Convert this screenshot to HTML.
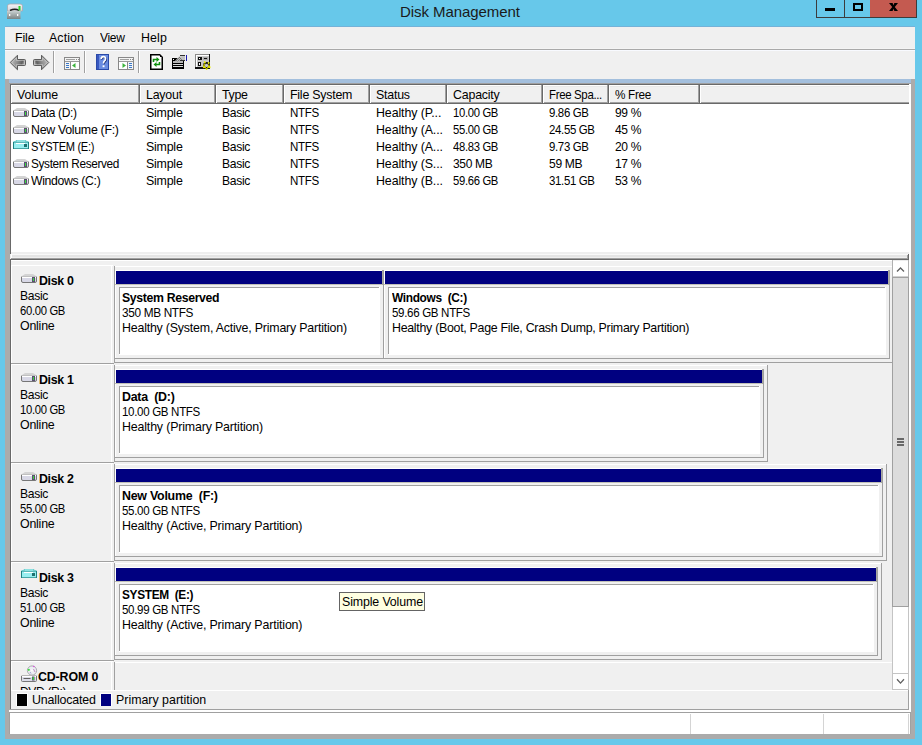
<!DOCTYPE html>
<html><head><meta charset="utf-8"><style>
html,body{margin:0;padding:0}
body{width:922px;height:745px;background:#67c8ea;position:relative;overflow:hidden;font-family:"Liberation Sans",sans-serif}
.r{position:absolute}
.t{position:absolute;white-space:pre}
</style></head><body>
<div class="r" style="left:5px;top:26px;width:910px;height:1px;background:#74b2d8;"></div>
<div class="r" style="left:5px;top:27px;width:910px;height:712px;background:#f0f0f0;"></div>
<svg class="r" style="left:4px;top:0px" width="22" height="22" viewBox="0 0 22 22">
<defs><linearGradient id="tib" x1="0" y1="0" x2="0" y2="1"><stop offset="0" stop-color="#c8d0d0"/><stop offset="1" stop-color="#7c8484"/></linearGradient>
<linearGradient id="tit" x1="0" y1="0" x2="0" y2="1"><stop offset="0" stop-color="#f4f4f4"/><stop offset="1" stop-color="#d8d4dc"/></linearGradient></defs>
<path d="M3.5 6 Q3.5 4 6 4 L16 4 Q18.5 4 18.5 6 L18.5 11 L3.5 11 Z" fill="url(#tit)" stroke="#a8a8b0" stroke-width="0.8"/>
<path d="M6 10.5 Q11 8 15 10.5" fill="none" stroke="#202020" stroke-width="1.4"/>
<rect x="14.5" y="6" width="2" height="4.5" fill="#30d030"/>
<rect x="3" y="11" width="13.5" height="8" fill="url(#tib)"/>
<rect x="5" y="14" width="1.3" height="2" fill="#ffffff"/>
<rect x="13" y="14" width="1.3" height="2" fill="#ffffff"/>
</svg>
<div class="t" style="left:400px;top:4.20px;font-size:15px;line-height:15px;color:#1a1a1a;letter-spacing:-0.07px;">Disk Management</div>
<div class="r" style="left:816px;top:0px;width:101px;height:18px;background:#3c3c3c;"></div>
<div class="r" style="left:817px;top:0px;width:27px;height:17px;background:#67c8ea;"></div>
<div class="r" style="left:845px;top:0px;width:25px;height:17px;background:#67c8ea;"></div>
<div class="r" style="left:870px;top:0px;width:46px;height:17px;background:#c45a50;"></div>
<div class="r" style="left:825px;top:8px;width:10px;height:3px;background:#000;"></div>
<div class="r" style="left:853px;top:3px;width:6px;height:4px;border:2px solid #000"></div>
<svg class="r" style="left:889px;top:3px" width="10" height="8" viewBox="0 0 10 8">
<path d="M0 0 L3.6 0 L4.5 2.2 L5.4 0 L9 0 L5.8 4 L9 8 L5.4 8 L4.5 5.8 L3.6 8 L0 8 L3.2 4 Z" fill="#000"/></svg>
<div class="t" style="left:15px;top:31.65px;font-size:12.4px;line-height:12.4px;color:#000;letter-spacing:-0.10px;">File</div>
<div class="t" style="left:49px;top:31.65px;font-size:12.4px;line-height:12.4px;color:#000;letter-spacing:0.10px;">Action</div>
<div class="t" style="left:100px;top:31.65px;font-size:12.4px;line-height:12.4px;color:#000;letter-spacing:-0.35px;transform:scaleX(0.9708);transform-origin:0 0;">View</div>
<div class="t" style="left:141px;top:31.65px;font-size:12.4px;line-height:12.4px;color:#000;letter-spacing:0.10px;">Help</div>
<div class="r" style="left:5px;top:48px;width:910px;height:1px;background:#f4f4f4;"></div>
<div class="r" style="left:5px;top:49px;width:910px;height:1px;background:#a9a9a9;"></div>
<div class="r" style="left:5px;top:50px;width:910px;height:1px;background:#f8faff;"></div>
<div class="r" style="left:53px;top:51px;width:1px;height:22px;background:#a0a0a0;"></div>
<div class="r" style="left:54px;top:51px;width:1px;height:22px;background:#ffffff;"></div>
<div class="r" style="left:84px;top:51px;width:1px;height:22px;background:#a0a0a0;"></div>
<div class="r" style="left:85px;top:51px;width:1px;height:22px;background:#ffffff;"></div>
<div class="r" style="left:138px;top:51px;width:1px;height:22px;background:#a0a0a0;"></div>
<div class="r" style="left:139px;top:51px;width:1px;height:22px;background:#ffffff;"></div>
<svg class="r" style="left:9px;top:54px" width="18" height="17" viewBox="0 0 18 17">
<defs><linearGradient id="ag" x1="0" y1="0" x2="1" y2="0.3"><stop offset="0" stop-color="#c8c8c8"/><stop offset="0.55" stop-color="#909090"/><stop offset="0.85" stop-color="#606060"/><stop offset="1" stop-color="#a0a0a0"/></linearGradient>
<linearGradient id="ag2" x1="1" y1="0" x2="0" y2="0.3"><stop offset="0" stop-color="#c8c8c8"/><stop offset="0.55" stop-color="#909090"/><stop offset="0.85" stop-color="#606060"/><stop offset="1" stop-color="#a0a0a0"/></linearGradient></defs>
<path d="M1.2 8.5 L8.5 1.2 L8.5 5.5 L15.5 5.5 Q16.5 5.5 16.5 6.5 L16.5 10.5 Q16.5 11.5 15.5 11.5 L8.5 11.5 L8.5 15.8 Z" fill="url(#ag)" stroke="#5c5c5c" stroke-width="1"/>
<path d="M2.8 8.5 L7.5 3.8 L7.5 6.5 L15.5 6.5 L15.5 10.5 L7.5 10.5 L7.5 13.2 Z" fill="none" stroke="#e0e0e0" stroke-width="0.6" opacity="0.8"/>
</svg>
<svg class="r" style="left:32px;top:54px" width="18" height="17" viewBox="0 0 18 17">
<path d="M16.8 8.5 L9.5 1.2 L9.5 5.5 L2.5 5.5 Q1.5 5.5 1.5 6.5 L1.5 10.5 Q1.5 11.5 2.5 11.5 L9.5 11.5 L9.5 15.8 Z" fill="url(#ag2)" stroke="#5c5c5c" stroke-width="1"/>
<path d="M15.2 8.5 L10.5 3.8 L10.5 6.5 L2.5 6.5 L2.5 10.5 L10.5 10.5 L10.5 13.2 Z" fill="none" stroke="#e0e0e0" stroke-width="0.6" opacity="0.8"/>
</svg>
<svg class="r" style="left:64px;top:57px" width="16" height="13" viewBox="0 0 16 13">
<rect x="0.5" y="0.5" width="15" height="12" fill="#f4f4f4" stroke="#888"/>
<rect x="2" y="2" width="9" height="1" fill="#a0a0a0"/>
<rect x="12" y="2" width="1" height="1" fill="#888"/>
<rect x="14" y="2" width="1" height="1" fill="#888"/>
<rect x="1" y="4" width="14" height="1" fill="#9a9a9a"/>
<rect x="6" y="5" width="1" height="7" fill="#888"/>
<rect x="7" y="5" width="8" height="7" fill="#ffffff"/>
<rect x="2" y="6" width="3" height="1" fill="#3a78c8"/>
<rect x="2" y="8" width="3" height="1" fill="#3a78c8"/>
<rect x="2" y="10" width="3" height="1" fill="#3a78c8"/>
<path d="M8 8.5 L11.5 6 L11.5 11 Z" fill="#3cb43c"/></svg>
<svg class="r" style="left:118px;top:57px" width="16" height="13" viewBox="0 0 16 13">
<rect x="0.5" y="0.5" width="15" height="12" fill="#f4f4f4" stroke="#888"/>
<rect x="2" y="2" width="9" height="1" fill="#a0a0a0"/>
<rect x="12" y="2" width="1" height="1" fill="#888"/>
<rect x="14" y="2" width="1" height="1" fill="#888"/>
<rect x="1" y="4" width="14" height="1" fill="#9a9a9a"/>
<rect x="9" y="5" width="1" height="7" fill="#888"/>
<rect x="1" y="5" width="8" height="7" fill="#ffffff"/>
<rect x="11" y="6" width="3" height="1" fill="#3a78c8"/>
<rect x="11" y="8" width="3" height="1" fill="#3a78c8"/>
<rect x="11" y="10" width="3" height="1" fill="#3a78c8"/>
<path d="M8 8.5 L4.5 6 L4.5 11 Z" fill="#3cb43c"/></svg>
<svg class="r" style="left:96px;top:54px" width="13" height="16" viewBox="0 0 13 16">
<rect x="0" y="0" width="13" height="16" fill="#2a4aa8"/>
<rect x="3" y="1" width="9" height="14" fill="#6a8ce0"/>
<rect x="1" y="1" width="2" height="14" fill="#3858c0"/>
<path d="M5.2 5 Q5.2 2.6 7.4 2.6 Q9.6 2.6 9.6 4.8 Q9.6 6.2 8.3 7.2 Q7.5 7.9 7.5 9.6" fill="none" stroke="#1a2a70" stroke-width="1.6" transform="translate(0.6,0.6)"/>
<path d="M5.2 5 Q5.2 2.6 7.4 2.6 Q9.6 2.6 9.6 4.8 Q9.6 6.2 8.3 7.2 Q7.5 7.9 7.5 9.6" fill="none" stroke="#ffffff" stroke-width="1.6"/>
<rect x="6.6" y="11.3" width="1.9" height="1.9" fill="#ffffff"/>
</svg>
<svg class="r" style="left:150px;top:54px" width="14" height="16" viewBox="0 0 14 16">
<path d="M0 0 L10 0 L13 3 L13 16 L0 16 Z" fill="#000"/>
<path d="M1.5 1.5 L9.5 1.5 L11.5 3.5 L11.5 14.5 L1.5 14.5 Z" fill="#fff"/>
<rect x="10" y="1" width="1" height="2" fill="#000"/>
<path d="M3.5 8 L3.5 5.5 L7 5.5" fill="none" stroke="#109010" stroke-width="1.6"/>
<path d="M6.5 3 L9.5 5.5 L6.5 8 Z" fill="#109010"/>
<path d="M9.5 8 L9.5 10.5 L6 10.5" fill="none" stroke="#109010" stroke-width="1.6"/>
<path d="M6.5 8 L3.5 10.5 L6.5 13 Z" fill="#109010"/>
</svg>
<svg class="r" style="left:172px;top:55px" width="15" height="14" viewBox="0 0 15 14">
<rect x="0" y="3" width="12" height="11" fill="#000"/>
<rect x="1" y="6" width="10" height="2" fill="#b8b8b8"/>
<rect x="1" y="9" width="10" height="1" fill="#d8d8d8"/>
<rect x="1" y="11" width="10" height="1" fill="#d8d8d8"/>
<rect x="1" y="4" width="1" height="1" fill="#fff"/>
<path d="M3 6 L7 1.5 L13 1 L13 5 L9 5 L6 7 Z" fill="#c0c0c0"/>
<path d="M4 6 L7.5 2.5 M5.5 6.5 L8.5 3.5 M7 2 L10 5" stroke="#606060" stroke-width="0.7"/>
<rect x="8" y="0" width="5" height="1" fill="#303030"/>
<rect x="8" y="5" width="5" height="1" fill="#303030"/>
<rect x="14" y="0" width="1" height="6" fill="#1a1ab0"/>
</svg>
<svg class="r" style="left:195px;top:54px" width="17" height="17" viewBox="0 0 17 17">
<rect x="0" y="0" width="15" height="15" fill="#101010"/>
<rect x="0" y="0" width="14" height="1" fill="#8a8a8a"/>
<rect x="0" y="0" width="1" height="14" fill="#8a8a8a"/>
<rect x="1" y="1" width="13" height="12" fill="#c8c8c8"/>
<rect x="1" y="1" width="13" height="1" fill="#ffffff"/>
<rect x="1" y="1" width="1" height="12" fill="#ffffff"/>
<rect x="3" y="3" width="4" height="3" fill="#101010"/>
<rect x="4" y="4" width="1" height="1" fill="#ffffff"/>
<rect x="8" y="3" width="5" height="3" fill="#a8a8a8"/>
<rect x="9" y="4" width="3" height="1" fill="#101010"/>
<rect x="3" y="8" width="3" height="4" fill="#101010"/>
<rect x="4" y="9" width="1" height="2" fill="#ffffff"/>
<rect x="0" y="13" width="9" height="2" fill="#101010"/>
<circle cx="11.5" cy="11.5" r="2.6" fill="none" stroke="#101010" stroke-width="1.8"/>
<path d="M9.3 7.3 L10.3 9.3 M14.3 8.3 L13.2 9.8 M8 13.5 L9.5 12.8 M15.5 13.5 L13.8 12.8 M11.6 16 L11.6 14.3" stroke="#f0f000" stroke-width="1.5"/>
<path d="M9.4 10 A2.6 2.6 0 0 0 11 14 M12 14 A2.6 2.6 0 0 0 13.8 10.6" fill="none" stroke="#f0f000" stroke-width="1.2"/>
</svg>
<div class="r" style="left:5px;top:79px;width:5px;height:660px;background:#ababab;"></div>
<div class="r" style="left:911px;top:79px;width:4px;height:660px;background:#ababab;"></div>
<div class="r" style="left:5px;top:734px;width:910px;height:5px;background:#ababab;"></div>
<div class="r" style="left:9px;top:79px;width:902px;height:4px;background:#a3bfdd;"></div>
<div class="r" style="left:9px;top:83px;width:902px;height:1px;background:#a0a0a0;"></div>
<div class="r" style="left:10px;top:84px;width:899px;height:170px;background:#ffffff;"></div>
<div class="r" style="left:10px;top:84px;width:899px;height:1px;background:#696969;"></div>
<div class="r" style="left:10px;top:84px;width:1px;height:170px;background:#696969;"></div>
<div class="r" style="left:909px;top:84px;width:2px;height:629px;background:#ffffff;"></div>
<div class="r" style="left:11px;top:85px;width:898px;height:18px;background:#f0f0f0;"></div>
<div class="r" style="left:11px;top:85px;width:898px;height:1px;background:#ffffff;"></div>
<div class="r" style="left:11px;top:86px;width:898px;height:1px;background:#e8e8e8;"></div>
<div class="r" style="left:11px;top:102px;width:898px;height:1px;background:#a0a0a0;"></div>
<div class="r" style="left:11px;top:103px;width:898px;height:1px;background:#696969;"></div>
<div class="r" style="left:11px;top:85px;width:1px;height:18px;background:#ffffff;"></div>
<div class="r" style="left:140px;top:85px;width:1px;height:18px;background:#ffffff;"></div>
<div class="r" style="left:138px;top:85px;width:1px;height:18px;background:#a0a0a0;"></div>
<div class="r" style="left:139px;top:85px;width:1px;height:19px;background:#696969;"></div>
<div class="r" style="left:216px;top:85px;width:1px;height:18px;background:#ffffff;"></div>
<div class="r" style="left:214px;top:85px;width:1px;height:18px;background:#a0a0a0;"></div>
<div class="r" style="left:215px;top:85px;width:1px;height:19px;background:#696969;"></div>
<div class="r" style="left:284px;top:85px;width:1px;height:18px;background:#ffffff;"></div>
<div class="r" style="left:282px;top:85px;width:1px;height:18px;background:#a0a0a0;"></div>
<div class="r" style="left:283px;top:85px;width:1px;height:19px;background:#696969;"></div>
<div class="r" style="left:370px;top:85px;width:1px;height:18px;background:#ffffff;"></div>
<div class="r" style="left:368px;top:85px;width:1px;height:18px;background:#a0a0a0;"></div>
<div class="r" style="left:369px;top:85px;width:1px;height:19px;background:#696969;"></div>
<div class="r" style="left:447px;top:85px;width:1px;height:18px;background:#ffffff;"></div>
<div class="r" style="left:445px;top:85px;width:1px;height:18px;background:#a0a0a0;"></div>
<div class="r" style="left:446px;top:85px;width:1px;height:19px;background:#696969;"></div>
<div class="r" style="left:543px;top:85px;width:1px;height:18px;background:#ffffff;"></div>
<div class="r" style="left:541px;top:85px;width:1px;height:18px;background:#a0a0a0;"></div>
<div class="r" style="left:542px;top:85px;width:1px;height:19px;background:#696969;"></div>
<div class="r" style="left:609px;top:85px;width:1px;height:18px;background:#ffffff;"></div>
<div class="r" style="left:607px;top:85px;width:1px;height:18px;background:#a0a0a0;"></div>
<div class="r" style="left:608px;top:85px;width:1px;height:19px;background:#696969;"></div>
<div class="r" style="left:700px;top:85px;width:1px;height:18px;background:#ffffff;"></div>
<div class="r" style="left:698px;top:85px;width:1px;height:18px;background:#a0a0a0;"></div>
<div class="r" style="left:699px;top:85px;width:1px;height:19px;background:#696969;"></div>
<div class="t" style="left:17px;top:88.65px;font-size:12.4px;line-height:12.4px;color:#000;letter-spacing:-0.06px;">Volume</div>
<div class="t" style="left:146px;top:88.65px;font-size:12.4px;line-height:12.4px;color:#000;letter-spacing:-0.22px;">Layout</div>
<div class="t" style="left:222px;top:88.65px;font-size:12.4px;line-height:12.4px;color:#000;letter-spacing:-0.30px;">Type</div>
<div class="t" style="left:290px;top:88.65px;font-size:12.4px;line-height:12.4px;color:#000;letter-spacing:-0.23px;">File System</div>
<div class="t" style="left:376px;top:88.65px;font-size:12.4px;line-height:12.4px;color:#000;letter-spacing:-0.22px;">Status</div>
<div class="t" style="left:453px;top:88.65px;font-size:12.4px;line-height:12.4px;color:#000;letter-spacing:-0.20px;">Capacity</div>
<div class="t" style="left:549px;top:88.65px;font-size:12.4px;line-height:12.4px;color:#000;letter-spacing:-0.35px;transform:scaleX(0.9221);transform-origin:0 0;">Free Spa...</div>
<div class="t" style="left:615px;top:88.65px;font-size:12.4px;line-height:12.4px;color:#000;letter-spacing:-0.35px;transform:scaleX(0.9477);transform-origin:0 0;">% Free</div>
<svg class="r" style="left:13px;top:108px" width="17" height="10" viewBox="0 0 17 10">
<path d="M4 0 L12 0 L15 2 L1 2 Z" fill="#d4d4d4"/>
<path d="M0.5 3 L0.5 7 Q0.5 8.5 2 8.5 L14 8.5 Q15.5 8.5 15.5 7 L15.5 3" fill="#d8d8e6" stroke="#767676"/>
<rect x="0" y="2" width="16" height="1" fill="#c0c0c0"/>
<rect x="1" y="3" width="14" height="1" fill="#ffffff"/>
<rect x="11" y="3" width="3" height="5" fill="#5a5070"/>
<rect x="12" y="4" width="1" height="3" fill="#38e038"/>
</svg>
<div class="t" style="left:31px;top:106.65px;font-size:12.4px;line-height:12.4px;color:#000;letter-spacing:-0.35px;transform:scaleX(0.9680);transform-origin:0 0;">Data (D:)</div>
<div class="t" style="left:146px;top:106.65px;font-size:12.4px;line-height:12.4px;color:#000;letter-spacing:-0.22px;">Simple</div>
<div class="t" style="left:222px;top:106.65px;font-size:12.4px;line-height:12.4px;color:#000;letter-spacing:-0.35px;transform:scaleX(0.9792);transform-origin:0 0;">Basic</div>
<div class="t" style="left:290px;top:106.65px;font-size:12.4px;line-height:12.4px;color:#000;letter-spacing:-0.35px;transform:scaleX(0.9330);transform-origin:0 0;">NTFS</div>
<div class="t" style="left:376px;top:106.65px;font-size:12.4px;line-height:12.4px;color:#000;letter-spacing:-0.10px;">Healthy (P...</div>
<div class="t" style="left:453px;top:106.65px;font-size:12.4px;line-height:12.4px;color:#000;letter-spacing:-0.35px;transform:scaleX(0.9089);transform-origin:0 0;">10.00 GB</div>
<div class="t" style="left:549px;top:106.65px;font-size:12.4px;line-height:12.4px;color:#000;letter-spacing:-0.35px;transform:scaleX(0.9212);transform-origin:0 0;">9.86 GB</div>
<div class="t" style="left:615px;top:106.65px;font-size:12.4px;line-height:12.4px;color:#000;letter-spacing:-0.35px;transform:scaleX(0.9725);transform-origin:0 0;">99 %</div>
<svg class="r" style="left:13px;top:125px" width="17" height="10" viewBox="0 0 17 10">
<path d="M4 0 L12 0 L15 2 L1 2 Z" fill="#d4d4d4"/>
<path d="M0.5 3 L0.5 7 Q0.5 8.5 2 8.5 L14 8.5 Q15.5 8.5 15.5 7 L15.5 3" fill="#d8d8e6" stroke="#767676"/>
<rect x="0" y="2" width="16" height="1" fill="#c0c0c0"/>
<rect x="1" y="3" width="14" height="1" fill="#ffffff"/>
<rect x="11" y="3" width="3" height="5" fill="#5a5070"/>
<rect x="12" y="4" width="1" height="3" fill="#38e038"/>
</svg>
<div class="t" style="left:31px;top:123.65px;font-size:12.4px;line-height:12.4px;color:#000;letter-spacing:-0.31px;">New Volume (F:)</div>
<div class="t" style="left:146px;top:123.65px;font-size:12.4px;line-height:12.4px;color:#000;letter-spacing:-0.22px;">Simple</div>
<div class="t" style="left:222px;top:123.65px;font-size:12.4px;line-height:12.4px;color:#000;letter-spacing:-0.35px;transform:scaleX(0.9792);transform-origin:0 0;">Basic</div>
<div class="t" style="left:290px;top:123.65px;font-size:12.4px;line-height:12.4px;color:#000;letter-spacing:-0.35px;transform:scaleX(0.9330);transform-origin:0 0;">NTFS</div>
<div class="t" style="left:376px;top:123.65px;font-size:12.4px;line-height:12.4px;color:#000;letter-spacing:-0.10px;">Healthy (A...</div>
<div class="t" style="left:453px;top:123.65px;font-size:12.4px;line-height:12.4px;color:#000;letter-spacing:-0.35px;transform:scaleX(0.9089);transform-origin:0 0;">55.00 GB</div>
<div class="t" style="left:549px;top:123.65px;font-size:12.4px;line-height:12.4px;color:#000;letter-spacing:-0.35px;transform:scaleX(0.9215);transform-origin:0 0;">24.55 GB</div>
<div class="t" style="left:615px;top:123.65px;font-size:12.4px;line-height:12.4px;color:#000;letter-spacing:-0.35px;transform:scaleX(0.9725);transform-origin:0 0;">45 %</div>
<svg class="r" style="left:13px;top:140px" width="17" height="10" viewBox="0 0 17 10">
<path d="M3 0 L13 0 L13.5 1 L15.5 1 L15.5 2 L0.5 2 L0.5 1 L2.5 1 Z" fill="#70cccc"/>
<rect x="4" y="0.5" width="8" height="1" fill="#a8f4f4"/>
<rect x="0" y="2" width="16" height="7" fill="#1e8282"/>
<rect x="1" y="2.5" width="14" height="5.5" fill="#98eef0"/>
<rect x="3" y="3" width="9" height="1" fill="#ffffff"/>
<rect x="11" y="4" width="3" height="3" fill="#1e7070"/>
<rect x="1" y="8" width="14" height="0.6" fill="#60c0c0"/>
</svg>
<div class="t" style="left:31px;top:140.65px;font-size:12.4px;line-height:12.4px;color:#000;letter-spacing:-0.35px;transform:scaleX(0.8942);transform-origin:0 0;">SYSTEM (E:)</div>
<div class="t" style="left:146px;top:140.65px;font-size:12.4px;line-height:12.4px;color:#000;letter-spacing:-0.22px;">Simple</div>
<div class="t" style="left:222px;top:140.65px;font-size:12.4px;line-height:12.4px;color:#000;letter-spacing:-0.35px;transform:scaleX(0.9792);transform-origin:0 0;">Basic</div>
<div class="t" style="left:290px;top:140.65px;font-size:12.4px;line-height:12.4px;color:#000;letter-spacing:-0.35px;transform:scaleX(0.9330);transform-origin:0 0;">NTFS</div>
<div class="t" style="left:376px;top:140.65px;font-size:12.4px;line-height:12.4px;color:#000;letter-spacing:-0.10px;">Healthy (A...</div>
<div class="t" style="left:453px;top:140.65px;font-size:12.4px;line-height:12.4px;color:#000;letter-spacing:-0.35px;transform:scaleX(0.9089);transform-origin:0 0;">48.83 GB</div>
<div class="t" style="left:549px;top:140.65px;font-size:12.4px;line-height:12.4px;color:#000;letter-spacing:-0.35px;transform:scaleX(0.9212);transform-origin:0 0;">9.73 GB</div>
<div class="t" style="left:615px;top:140.65px;font-size:12.4px;line-height:12.4px;color:#000;letter-spacing:-0.35px;transform:scaleX(0.9725);transform-origin:0 0;">20 %</div>
<svg class="r" style="left:13px;top:159px" width="17" height="10" viewBox="0 0 17 10">
<path d="M4 0 L12 0 L15 2 L1 2 Z" fill="#d4d4d4"/>
<path d="M0.5 3 L0.5 7 Q0.5 8.5 2 8.5 L14 8.5 Q15.5 8.5 15.5 7 L15.5 3" fill="#d8d8e6" stroke="#767676"/>
<rect x="0" y="2" width="16" height="1" fill="#c0c0c0"/>
<rect x="1" y="3" width="14" height="1" fill="#ffffff"/>
<rect x="11" y="3" width="3" height="5" fill="#5a5070"/>
<rect x="12" y="4" width="1" height="3" fill="#38e038"/>
</svg>
<div class="t" style="left:31px;top:157.65px;font-size:12.4px;line-height:12.4px;color:#000;letter-spacing:-0.35px;transform:scaleX(0.9518);transform-origin:0 0;">System Reserved</div>
<div class="t" style="left:146px;top:157.65px;font-size:12.4px;line-height:12.4px;color:#000;letter-spacing:-0.22px;">Simple</div>
<div class="t" style="left:222px;top:157.65px;font-size:12.4px;line-height:12.4px;color:#000;letter-spacing:-0.35px;transform:scaleX(0.9792);transform-origin:0 0;">Basic</div>
<div class="t" style="left:290px;top:157.65px;font-size:12.4px;line-height:12.4px;color:#000;letter-spacing:-0.35px;transform:scaleX(0.9330);transform-origin:0 0;">NTFS</div>
<div class="t" style="left:376px;top:157.65px;font-size:12.4px;line-height:12.4px;color:#000;letter-spacing:-0.10px;">Healthy (S...</div>
<div class="t" style="left:453px;top:157.65px;font-size:12.4px;line-height:12.4px;color:#000;letter-spacing:-0.35px;transform:scaleX(0.9695);transform-origin:0 0;">350 MB</div>
<div class="t" style="left:549px;top:157.65px;font-size:12.4px;line-height:12.4px;color:#000;letter-spacing:-0.35px;transform:scaleX(0.9767);transform-origin:0 0;">59 MB</div>
<div class="t" style="left:615px;top:157.65px;font-size:12.4px;line-height:12.4px;color:#000;letter-spacing:-0.35px;transform:scaleX(0.9725);transform-origin:0 0;">17 %</div>
<svg class="r" style="left:13px;top:176px" width="17" height="10" viewBox="0 0 17 10">
<path d="M4 0 L12 0 L15 2 L1 2 Z" fill="#d4d4d4"/>
<path d="M0.5 3 L0.5 7 Q0.5 8.5 2 8.5 L14 8.5 Q15.5 8.5 15.5 7 L15.5 3" fill="#d8d8e6" stroke="#767676"/>
<rect x="0" y="2" width="16" height="1" fill="#c0c0c0"/>
<rect x="1" y="3" width="14" height="1" fill="#ffffff"/>
<rect x="11" y="3" width="3" height="5" fill="#5a5070"/>
<rect x="12" y="4" width="1" height="3" fill="#38e038"/>
</svg>
<div class="t" style="left:31px;top:174.65px;font-size:12.4px;line-height:12.4px;color:#000;letter-spacing:-0.35px;transform:scaleX(0.9891);transform-origin:0 0;">Windows (C:)</div>
<div class="t" style="left:146px;top:174.65px;font-size:12.4px;line-height:12.4px;color:#000;letter-spacing:-0.22px;">Simple</div>
<div class="t" style="left:222px;top:174.65px;font-size:12.4px;line-height:12.4px;color:#000;letter-spacing:-0.35px;transform:scaleX(0.9792);transform-origin:0 0;">Basic</div>
<div class="t" style="left:290px;top:174.65px;font-size:12.4px;line-height:12.4px;color:#000;letter-spacing:-0.35px;transform:scaleX(0.9330);transform-origin:0 0;">NTFS</div>
<div class="t" style="left:376px;top:174.65px;font-size:12.4px;line-height:12.4px;color:#000;letter-spacing:-0.10px;">Healthy (B...</div>
<div class="t" style="left:453px;top:174.65px;font-size:12.4px;line-height:12.4px;color:#000;letter-spacing:-0.35px;transform:scaleX(0.9089);transform-origin:0 0;">59.66 GB</div>
<div class="t" style="left:549px;top:174.65px;font-size:12.4px;line-height:12.4px;color:#000;letter-spacing:-0.35px;transform:scaleX(0.9215);transform-origin:0 0;">31.51 GB</div>
<div class="t" style="left:615px;top:174.65px;font-size:12.4px;line-height:12.4px;color:#000;letter-spacing:-0.35px;transform:scaleX(0.9725);transform-origin:0 0;">53 %</div>
<div class="r" style="left:11px;top:252px;width:898px;height:2px;background:#eeeeee;"></div>
<div class="r" style="left:11px;top:254px;width:897px;height:1px;background:#f8f8f8;"></div>
<div class="r" style="left:11px;top:255px;width:896px;height:2px;background:#e4e4e4;"></div>
<div class="r" style="left:11px;top:257px;width:896px;height:1px;background:#eeeeee;"></div>
<div class="r" style="left:11px;top:254px;width:1px;height:5px;background:#ffffff;"></div>
<div class="r" style="left:11px;top:258px;width:897px;height:1px;background:#a0a0a0;"></div>
<div class="r" style="left:907px;top:255px;width:1px;height:4px;background:#a0a0a0;"></div>
<div class="r" style="left:908px;top:254px;width:1px;height:6px;background:#696969;"></div>
<div class="r" style="left:10px;top:259px;width:899px;height:1px;background:#696969;"></div>
<div class="r" style="left:11px;top:260px;width:881px;height:1px;background:#ffffff;"></div>
<div class="r" style="left:10px;top:259px;width:1px;height:450px;background:#696969;"></div>
<div class="r" style="left:11px;top:265px;width:102px;height:1px;background:#ffffff;"></div>
<div class="r" style="left:11px;top:265px;width:1px;height:98px;background:#ffffff;"></div>
<div class="r" style="left:111px;top:265px;width:1px;height:98px;background:#ffffff;"></div>
<div class="r" style="left:11px;top:363px;width:103px;height:1px;background:#a0a0a0;"></div>
<svg class="r" style="left:21px;top:274px" width="17" height="10" viewBox="0 0 17 10">
<path d="M4 0 L12 0 L15 2 L1 2 Z" fill="#d4d4d4"/>
<path d="M0.5 3 L0.5 7 Q0.5 8.5 2 8.5 L14 8.5 Q15.5 8.5 15.5 7 L15.5 3" fill="#d8d8e6" stroke="#767676"/>
<rect x="0" y="2" width="16" height="1" fill="#c0c0c0"/>
<rect x="1" y="3" width="14" height="1" fill="#ffffff"/>
<rect x="11" y="3" width="3" height="5" fill="#5a5070"/>
<rect x="12" y="4" width="1" height="3" fill="#38e038"/>
</svg>
<div class="t" style="left:39px;top:274.65px;font-size:12.4px;line-height:12.4px;font-weight:bold;color:#000;letter-spacing:-0.34px;">Disk 0</div>
<div class="t" style="left:20px;top:289.65px;font-size:12.4px;line-height:12.4px;color:#000;letter-spacing:-0.35px;transform:scaleX(0.9792);transform-origin:0 0;">Basic</div>
<div class="t" style="left:20px;top:304.65px;font-size:12.4px;line-height:12.4px;color:#000;letter-spacing:-0.35px;transform:scaleX(0.9089);transform-origin:0 0;">60.00 GB</div>
<div class="t" style="left:20px;top:319.65px;font-size:12.4px;line-height:12.4px;color:#000;letter-spacing:-0.22px;">Online</div>
<div class="r" style="left:115px;top:266px;width:778px;height:1px;background:#ffffff;"></div>
<div class="r" style="left:114px;top:266px;width:1px;height:97px;background:#a0a0a0;"></div>
<div class="r" style="left:893px;top:266px;width:1px;height:97px;background:#a0a0a0;"></div>
<div class="r" style="left:114px;top:362px;width:780px;height:1px;background:#a0a0a0;"></div>
<div class="r" style="left:114px;top:270px;width:1px;height:89px;background:#a0a0a0;"></div>
<div class="r" style="left:115px;top:270px;width:268px;height:1px;background:#ffffff;"></div>
<div class="r" style="left:115px;top:270px;width:1px;height:88px;background:#ffffff;"></div>
<div class="r" style="left:116px;top:271px;width:266px;height:13px;background:#000080;"></div>
<div class="r" style="left:115px;top:284px;width:268px;height:1px;background:#c0c0b8;"></div>
<div class="r" style="left:382px;top:270px;width:1px;height:15px;background:#a8a8a0;"></div>
<div class="r" style="left:383px;top:270px;width:1px;height:89px;background:#a0a0a0;"></div>
<div class="r" style="left:114px;top:358px;width:270px;height:1px;background:#a0a0a0;"></div>
<div class="r" style="left:119px;top:287px;width:261px;height:68px;background:#ffffff;"></div>
<div class="r" style="left:119px;top:287px;width:260px;height:1px;background:#a0a0a0;"></div>
<div class="r" style="left:119px;top:287px;width:1px;height:67px;background:#a0a0a0;"></div>
<div class="t" style="left:122px;top:291.65px;font-size:12.4px;line-height:12.4px;font-weight:bold;color:#000;letter-spacing:-0.35px;transform:scaleX(0.9915);transform-origin:0 0;">System Reserved</div>
<div class="t" style="left:122px;top:306.65px;font-size:12.4px;line-height:12.4px;color:#000;letter-spacing:-0.35px;transform:scaleX(0.9534);transform-origin:0 0;">350 MB NTFS</div>
<div class="t" style="left:122px;top:321.65px;font-size:12.4px;line-height:12.4px;color:#000;letter-spacing:-0.20px;">Healthy (System, Active, Primary Partition)</div>
<div class="r" style="left:383px;top:270px;width:1px;height:89px;background:#a0a0a0;"></div>
<div class="r" style="left:384px;top:270px;width:505px;height:1px;background:#ffffff;"></div>
<div class="r" style="left:384px;top:270px;width:1px;height:88px;background:#ffffff;"></div>
<div class="r" style="left:385px;top:271px;width:503px;height:13px;background:#000080;"></div>
<div class="r" style="left:384px;top:284px;width:505px;height:1px;background:#c0c0b8;"></div>
<div class="r" style="left:888px;top:270px;width:1px;height:15px;background:#a8a8a0;"></div>
<div class="r" style="left:889px;top:270px;width:1px;height:89px;background:#a0a0a0;"></div>
<div class="r" style="left:383px;top:358px;width:507px;height:1px;background:#a0a0a0;"></div>
<div class="r" style="left:388px;top:287px;width:498px;height:68px;background:#ffffff;"></div>
<div class="r" style="left:388px;top:287px;width:497px;height:1px;background:#a0a0a0;"></div>
<div class="r" style="left:388px;top:287px;width:1px;height:67px;background:#a0a0a0;"></div>
<div class="t" style="left:392px;top:291.65px;font-size:12.4px;line-height:12.4px;font-weight:bold;color:#000;letter-spacing:-0.35px;transform:scaleX(0.9602);transform-origin:0 0;">Windows&nbsp; (C:)</div>
<div class="t" style="left:392px;top:306.65px;font-size:12.4px;line-height:12.4px;color:#000;letter-spacing:-0.35px;transform:scaleX(0.9330);transform-origin:0 0;">59.66 GB NTFS</div>
<div class="t" style="left:392px;top:321.65px;font-size:12.4px;line-height:12.4px;color:#000;letter-spacing:-0.29px;">Healthy (Boot, Page File, Crash Dump, Primary Partition)</div>
<div class="r" style="left:11px;top:364px;width:102px;height:1px;background:#ffffff;"></div>
<div class="r" style="left:11px;top:364px;width:1px;height:98px;background:#ffffff;"></div>
<div class="r" style="left:111px;top:364px;width:1px;height:98px;background:#ffffff;"></div>
<div class="r" style="left:11px;top:462px;width:103px;height:1px;background:#a0a0a0;"></div>
<svg class="r" style="left:21px;top:373px" width="17" height="10" viewBox="0 0 17 10">
<path d="M4 0 L12 0 L15 2 L1 2 Z" fill="#d4d4d4"/>
<path d="M0.5 3 L0.5 7 Q0.5 8.5 2 8.5 L14 8.5 Q15.5 8.5 15.5 7 L15.5 3" fill="#d8d8e6" stroke="#767676"/>
<rect x="0" y="2" width="16" height="1" fill="#c0c0c0"/>
<rect x="1" y="3" width="14" height="1" fill="#ffffff"/>
<rect x="11" y="3" width="3" height="5" fill="#5a5070"/>
<rect x="12" y="4" width="1" height="3" fill="#38e038"/>
</svg>
<div class="t" style="left:39px;top:373.65px;font-size:12.4px;line-height:12.4px;font-weight:bold;color:#000;letter-spacing:-0.34px;">Disk 1</div>
<div class="t" style="left:20px;top:388.65px;font-size:12.4px;line-height:12.4px;color:#000;letter-spacing:-0.35px;transform:scaleX(0.9792);transform-origin:0 0;">Basic</div>
<div class="t" style="left:20px;top:403.65px;font-size:12.4px;line-height:12.4px;color:#000;letter-spacing:-0.35px;transform:scaleX(0.9089);transform-origin:0 0;">10.00 GB</div>
<div class="t" style="left:20px;top:418.65px;font-size:12.4px;line-height:12.4px;color:#000;letter-spacing:-0.22px;">Online</div>
<div class="r" style="left:115px;top:365px;width:652px;height:1px;background:#ffffff;"></div>
<div class="r" style="left:114px;top:365px;width:1px;height:97px;background:#a0a0a0;"></div>
<div class="r" style="left:767px;top:365px;width:1px;height:97px;background:#a0a0a0;"></div>
<div class="r" style="left:114px;top:461px;width:654px;height:1px;background:#a0a0a0;"></div>
<div class="r" style="left:114px;top:369px;width:1px;height:89px;background:#a0a0a0;"></div>
<div class="r" style="left:115px;top:369px;width:648px;height:1px;background:#ffffff;"></div>
<div class="r" style="left:115px;top:369px;width:1px;height:88px;background:#ffffff;"></div>
<div class="r" style="left:116px;top:370px;width:646px;height:13px;background:#000080;"></div>
<div class="r" style="left:115px;top:383px;width:648px;height:1px;background:#c0c0b8;"></div>
<div class="r" style="left:762px;top:369px;width:1px;height:15px;background:#a8a8a0;"></div>
<div class="r" style="left:763px;top:369px;width:1px;height:89px;background:#a0a0a0;"></div>
<div class="r" style="left:114px;top:457px;width:650px;height:1px;background:#a0a0a0;"></div>
<div class="r" style="left:119px;top:386px;width:641px;height:68px;background:#ffffff;"></div>
<div class="r" style="left:119px;top:386px;width:640px;height:1px;background:#a0a0a0;"></div>
<div class="r" style="left:119px;top:386px;width:1px;height:67px;background:#a0a0a0;"></div>
<div class="t" style="left:122px;top:390.65px;font-size:12.4px;line-height:12.4px;font-weight:bold;color:#000;letter-spacing:-0.25px;">Data&nbsp; (D:)</div>
<div class="t" style="left:122px;top:405.65px;font-size:12.4px;line-height:12.4px;color:#000;letter-spacing:-0.35px;transform:scaleX(0.9330);transform-origin:0 0;">10.00 GB NTFS</div>
<div class="t" style="left:122px;top:420.65px;font-size:12.4px;line-height:12.4px;color:#000;letter-spacing:-0.16px;">Healthy (Primary Partition)</div>
<div class="r" style="left:11px;top:463px;width:102px;height:1px;background:#ffffff;"></div>
<div class="r" style="left:11px;top:463px;width:1px;height:98px;background:#ffffff;"></div>
<div class="r" style="left:111px;top:463px;width:1px;height:98px;background:#ffffff;"></div>
<div class="r" style="left:11px;top:561px;width:103px;height:1px;background:#a0a0a0;"></div>
<svg class="r" style="left:21px;top:472px" width="17" height="10" viewBox="0 0 17 10">
<path d="M4 0 L12 0 L15 2 L1 2 Z" fill="#d4d4d4"/>
<path d="M0.5 3 L0.5 7 Q0.5 8.5 2 8.5 L14 8.5 Q15.5 8.5 15.5 7 L15.5 3" fill="#d8d8e6" stroke="#767676"/>
<rect x="0" y="2" width="16" height="1" fill="#c0c0c0"/>
<rect x="1" y="3" width="14" height="1" fill="#ffffff"/>
<rect x="11" y="3" width="3" height="5" fill="#5a5070"/>
<rect x="12" y="4" width="1" height="3" fill="#38e038"/>
</svg>
<div class="t" style="left:39px;top:472.65px;font-size:12.4px;line-height:12.4px;font-weight:bold;color:#000;letter-spacing:-0.34px;">Disk 2</div>
<div class="t" style="left:20px;top:487.65px;font-size:12.4px;line-height:12.4px;color:#000;letter-spacing:-0.35px;transform:scaleX(0.9792);transform-origin:0 0;">Basic</div>
<div class="t" style="left:20px;top:502.65px;font-size:12.4px;line-height:12.4px;color:#000;letter-spacing:-0.35px;transform:scaleX(0.9089);transform-origin:0 0;">55.00 GB</div>
<div class="t" style="left:20px;top:517.65px;font-size:12.4px;line-height:12.4px;color:#000;letter-spacing:-0.22px;">Online</div>
<div class="r" style="left:115px;top:464px;width:771px;height:1px;background:#ffffff;"></div>
<div class="r" style="left:114px;top:464px;width:1px;height:97px;background:#a0a0a0;"></div>
<div class="r" style="left:886px;top:464px;width:1px;height:97px;background:#a0a0a0;"></div>
<div class="r" style="left:114px;top:560px;width:773px;height:1px;background:#a0a0a0;"></div>
<div class="r" style="left:114px;top:468px;width:1px;height:89px;background:#a0a0a0;"></div>
<div class="r" style="left:115px;top:468px;width:767px;height:1px;background:#ffffff;"></div>
<div class="r" style="left:115px;top:468px;width:1px;height:88px;background:#ffffff;"></div>
<div class="r" style="left:116px;top:469px;width:765px;height:13px;background:#000080;"></div>
<div class="r" style="left:115px;top:482px;width:767px;height:1px;background:#c0c0b8;"></div>
<div class="r" style="left:881px;top:468px;width:1px;height:15px;background:#a8a8a0;"></div>
<div class="r" style="left:882px;top:468px;width:1px;height:89px;background:#a0a0a0;"></div>
<div class="r" style="left:114px;top:556px;width:769px;height:1px;background:#a0a0a0;"></div>
<div class="r" style="left:119px;top:485px;width:760px;height:68px;background:#ffffff;"></div>
<div class="r" style="left:119px;top:485px;width:759px;height:1px;background:#a0a0a0;"></div>
<div class="r" style="left:119px;top:485px;width:1px;height:67px;background:#a0a0a0;"></div>
<div class="t" style="left:122px;top:489.65px;font-size:12.4px;line-height:12.4px;font-weight:bold;color:#000;letter-spacing:-0.24px;">New Volume&nbsp; (F:)</div>
<div class="t" style="left:122px;top:504.65px;font-size:12.4px;line-height:12.4px;color:#000;letter-spacing:-0.35px;transform:scaleX(0.9330);transform-origin:0 0;">55.00 GB NTFS</div>
<div class="t" style="left:122px;top:519.65px;font-size:12.4px;line-height:12.4px;color:#000;letter-spacing:-0.16px;">Healthy (Active, Primary Partition)</div>
<div class="r" style="left:11px;top:562px;width:102px;height:1px;background:#ffffff;"></div>
<div class="r" style="left:11px;top:562px;width:1px;height:98px;background:#ffffff;"></div>
<div class="r" style="left:111px;top:562px;width:1px;height:98px;background:#ffffff;"></div>
<div class="r" style="left:11px;top:660px;width:103px;height:1px;background:#a0a0a0;"></div>
<svg class="r" style="left:21px;top:569px" width="17" height="10" viewBox="0 0 17 10">
<path d="M3 0 L13 0 L13.5 1 L15.5 1 L15.5 2 L0.5 2 L0.5 1 L2.5 1 Z" fill="#70cccc"/>
<rect x="4" y="0.5" width="8" height="1" fill="#a8f4f4"/>
<rect x="0" y="2" width="16" height="7" fill="#1e8282"/>
<rect x="1" y="2.5" width="14" height="5.5" fill="#98eef0"/>
<rect x="3" y="3" width="9" height="1" fill="#ffffff"/>
<rect x="11" y="4" width="3" height="3" fill="#1e7070"/>
<rect x="1" y="8" width="14" height="0.6" fill="#60c0c0"/>
</svg>
<div class="t" style="left:39px;top:571.65px;font-size:12.4px;line-height:12.4px;font-weight:bold;color:#000;letter-spacing:-0.34px;">Disk 3</div>
<div class="t" style="left:20px;top:586.65px;font-size:12.4px;line-height:12.4px;color:#000;letter-spacing:-0.35px;transform:scaleX(0.9792);transform-origin:0 0;">Basic</div>
<div class="t" style="left:20px;top:601.65px;font-size:12.4px;line-height:12.4px;color:#000;letter-spacing:-0.35px;transform:scaleX(0.9089);transform-origin:0 0;">51.00 GB</div>
<div class="t" style="left:20px;top:616.65px;font-size:12.4px;line-height:12.4px;color:#000;letter-spacing:-0.22px;">Online</div>
<div class="r" style="left:115px;top:563px;width:766px;height:1px;background:#ffffff;"></div>
<div class="r" style="left:114px;top:563px;width:1px;height:97px;background:#a0a0a0;"></div>
<div class="r" style="left:881px;top:563px;width:1px;height:97px;background:#a0a0a0;"></div>
<div class="r" style="left:114px;top:659px;width:768px;height:1px;background:#a0a0a0;"></div>
<div class="r" style="left:114px;top:567px;width:1px;height:89px;background:#a0a0a0;"></div>
<div class="r" style="left:115px;top:567px;width:762px;height:1px;background:#ffffff;"></div>
<div class="r" style="left:115px;top:567px;width:1px;height:88px;background:#ffffff;"></div>
<div class="r" style="left:116px;top:568px;width:760px;height:13px;background:#000080;"></div>
<div class="r" style="left:115px;top:581px;width:762px;height:1px;background:#c0c0b8;"></div>
<div class="r" style="left:876px;top:567px;width:1px;height:15px;background:#a8a8a0;"></div>
<div class="r" style="left:877px;top:567px;width:1px;height:89px;background:#a0a0a0;"></div>
<div class="r" style="left:114px;top:655px;width:764px;height:1px;background:#a0a0a0;"></div>
<div class="r" style="left:119px;top:584px;width:755px;height:68px;background:#ffffff;"></div>
<div class="r" style="left:119px;top:584px;width:754px;height:1px;background:#a0a0a0;"></div>
<div class="r" style="left:119px;top:584px;width:1px;height:67px;background:#a0a0a0;"></div>
<div class="t" style="left:122px;top:588.65px;font-size:12.4px;line-height:12.4px;font-weight:bold;color:#000;letter-spacing:-0.35px;transform:scaleX(0.9582);transform-origin:0 0;">SYSTEM&nbsp; (E:)</div>
<div class="t" style="left:122px;top:603.65px;font-size:12.4px;line-height:12.4px;color:#000;letter-spacing:-0.35px;transform:scaleX(0.9330);transform-origin:0 0;">50.99 GB NTFS</div>
<div class="t" style="left:122px;top:618.65px;font-size:12.4px;line-height:12.4px;color:#000;letter-spacing:-0.16px;">Healthy (Active, Primary Partition)</div>
<div class="r" style="left:11px;top:661px;width:102px;height:1px;background:#ffffff;"></div>
<div class="r" style="left:11px;top:661px;width:1px;height:30px;background:#ffffff;"></div>
<div class="r" style="left:111px;top:661px;width:1px;height:30px;background:#ffffff;"></div>
<div class="r" style="left:115px;top:662px;width:777px;height:1px;background:#ffffff;"></div>
<div class="r" style="left:114px;top:662px;width:1px;height:30px;background:#a0a0a0;"></div>
<svg class="r" style="left:21px;top:665px" width="17" height="18" viewBox="0 0 17 18">
<circle cx="11" cy="5.5" r="4.6" fill="#eeeef4" stroke="#a0a0a8" stroke-width="0.9"/>
<circle cx="7.8" cy="4.8" r="1.1" fill="#40e040"/>
<circle cx="12.8" cy="1.5" r="0.7" fill="#e040e0"/>
<path d="M12.5 4 L14 7" stroke="#c090c0" stroke-width="1"/>
<path d="M9 7 L10 8.5" stroke="#a0a0d0" stroke-width="1"/>
<circle cx="11" cy="5.5" r="1" fill="#ffffff"/>
<path d="M0.5 11 L0.5 15.5 Q0.5 16.5 1.5 16.5 L14.5 16.5 Q15.5 16.5 15.5 15.5 L15.5 11" fill="#dcdce8" stroke="#767676"/>
<rect x="0.5" y="10" width="15" height="1" fill="#b8b8b8"/>
<rect x="1" y="11" width="14" height="1" fill="#ffffff"/>
<rect x="2.5" y="13" width="7" height="1" fill="#606060"/>
<rect x="11" y="11.5" width="2.5" height="4" fill="#5a5070"/>
<rect x="11.7" y="12" width="1.2" height="3" fill="#38e038"/>
</svg>
<div class="t" style="left:38px;top:670.65px;font-size:12.4px;line-height:12.4px;font-weight:bold;color:#000;letter-spacing:-0.14px;">CD-ROM 0</div>
<div class="t" style="left:20px;top:685.65px;font-size:12.4px;line-height:12.4px;color:#000;letter-spacing:-0.35px;transform:scaleX(0.9707);transform-origin:0 0;">DVD (R:)</div>
<div class="r" style="left:11px;top:690px;width:898px;height:19px;background:#f0f0f0;"></div>
<div class="r" style="left:11px;top:690px;width:898px;height:1px;background:#ffffff;"></div>
<div class="r" style="left:908px;top:690px;width:1px;height:20px;background:#a0a0a0;"></div>
<div class="r" style="left:10px;top:709px;width:899px;height:1px;background:#a0a0a0;"></div>
<div class="r" style="left:16px;top:693px;width:12px;height:13px;background:#ffffff;"></div>
<div class="r" style="left:17px;top:694px;width:10px;height:12px;background:#000000;"></div>
<div class="r" style="left:100px;top:693px;width:12px;height:13px;background:#ffffff;"></div>
<div class="r" style="left:101px;top:694px;width:10px;height:12px;background:#000080;"></div>
<div class="t" style="left:32px;top:693.65px;font-size:12.4px;line-height:12.4px;color:#000;letter-spacing:-0.15px;">Unallocated</div>
<div class="t" style="left:116px;top:693.65px;font-size:12.4px;line-height:12.4px;color:#000;letter-spacing:0.00px;">Primary partition</div>
<div class="r" style="left:892px;top:260px;width:17px;height:430px;background:#c4c4c4;"></div>
<div class="r" style="left:893px;top:260px;width:15px;height:429px;background:#ffffff;"></div>
<div class="r" style="left:892px;top:260px;width:1px;height:17px;background:#b0b0b0;"></div>
<div class="r" style="left:908px;top:260px;width:1px;height:17px;background:#b0b0b0;"></div>
<div class="r" style="left:892px;top:277px;width:17px;height:330px;background:#a0a0a0;"></div>
<div class="r" style="left:893px;top:278px;width:15px;height:328px;background:#dcdcdc;"></div>
<div class="r" style="left:893px;top:673px;width:15px;height:1px;background:#c4c4c4;"></div>
<div class="r" style="left:893px;top:276px;width:15px;height:1px;background:#d0d0d0;"></div>
<div class="r" style="left:893px;top:260px;width:15px;height:1px;background:#ececec;"></div>
<svg class="r" style="left:896px;top:266px" width="9" height="7" viewBox="0 0 9 7">
<path d="M1 5.5 L4.5 2 L8 5.5" fill="none" stroke="#606060" stroke-width="1.3"/></svg>
<svg class="r" style="left:896px;top:677px" width="9" height="8" viewBox="0 0 9 8">
<path d="M1 2.3 L4.5 6.1 L8 2.3" fill="none" stroke="#606060" stroke-width="1.3"/></svg>
<div class="r" style="left:897px;top:438px;width:7px;height:2px;background:#686868;"></div>
<div class="r" style="left:897px;top:441px;width:7px;height:2px;background:#686868;"></div>
<div class="r" style="left:897px;top:444px;width:7px;height:2px;background:#686868;"></div>
<div class="r" style="left:339px;top:592px;width:86px;height:19px;background:#646464;"></div>
<div class="r" style="left:340px;top:593px;width:84px;height:17px;background:#ffffe1;"></div>
<div class="t" style="left:342px;top:595.65px;font-size:12.4px;line-height:12.4px;color:#000;letter-spacing:-0.13px;">Simple Volume</div>
<div class="r" style="left:9px;top:710px;width:902px;height:2px;background:#ffffff;"></div>
<div class="r" style="left:9px;top:712px;width:902px;height:1px;background:#a0a0a0;"></div>
<div class="r" style="left:9px;top:712px;width:1px;height:22px;background:#a0a0a0;"></div>
<div class="r" style="left:10px;top:713px;width:900px;height:21px;background:#ffffff;"></div>
<div class="r" style="left:910px;top:712px;width:1px;height:22px;background:#a0a0a0;"></div>
<div class="r" style="left:908px;top:714px;width:1px;height:20px;background:#d4d4d4;"></div>
<div class="r" style="left:690px;top:714px;width:1px;height:20px;background:#d4d4d4;"></div>
<div class="r" style="left:823px;top:714px;width:1px;height:20px;background:#d4d4d4;"></div>
</body></html>
